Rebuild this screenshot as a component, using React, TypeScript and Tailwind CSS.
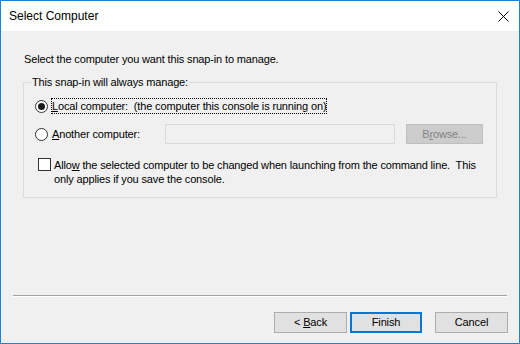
import { useState } from "react";

export default function App() {
    const [mode, setMode] = useState<"local" | "another">("local");
    const [allow, setAllow] = useState(false);

    return (
        <div
            className="w-[520px] h-[344px] flex flex-col border border-[#1883d7] bg-[#f0f0f0] text-[11px] leading-[15px] tracking-[-0.15px] text-black select-none"
            style={{ fontFamily: '"Liberation Sans", Arial, sans-serif' }}
        >
            {/* title bar */}
            <div className="h-[30px] bg-white flex items-center justify-between pl-[8px] pr-[10px] shrink-0">
                <span className="text-[12px] tracking-normal">Select Computer</span>
                <svg width="11" height="11" viewBox="0 0 11 11" className="mt-[1px]">
                    <path d="M0.5 0.5 L10.5 10.5 M10.5 0.5 L0.5 10.5" stroke="#000" strokeWidth="1" />
                </svg>
            </div>

            <div className="flex-1 flex flex-col px-[22px] pt-[21px]">
                <p className="ml-[1px]">Select the computer you want this snap-in to manage.</p>

                <fieldset className="mt-[8px] border border-[#dcdcdc] h-[123px] pl-[11px] pr-[12px]">
                    <legend className="-ml-[4px] px-[1px]">This snap-in will always manage:</legend>

                    <label className="flex items-center mt-[8px] h-[16px]" onClick={() => setMode("local")}>
                        <Radio checked={mode === "local"} />
                        <span className="ml-[3px] px-[1px] outline outline-1 outline-dotted outline-black -outline-offset-1 h-[16px] leading-[16px] whitespace-nowrap">
                            <u>L</u>ocal computer:&nbsp; (the computer this console is running on)
                        </span>
                    </label>

                    <div className="flex items-center mt-[10px] h-[20px]">
                        <label className="flex items-center w-[130px]" onClick={() => setMode("another")}>
                            <Radio checked={mode === "another"} />
                            <span className="ml-[4px]">
                                <u>A</u>nother computer:
                            </span>
                        </label>
                        <div className="w-[230px] h-[20px] border border-[#d9d9d9] bg-[#f0f0f0]" />
                        <button className="ml-[11px] w-[77px] h-[20px] border border-[#bfbfbf] bg-[#cccccc] text-[#838383]">
                            B<u>r</u>owse...
                        </button>
                    </div>

                    <label className="flex items-start mt-[14px]" onClick={() => setAllow(!allow)}>
                        <span className="w-[13px] h-[13px] border border-[#333333] bg-white shrink-0 ml-[3px]">
                            {allow && (
                                <svg width="11" height="11" viewBox="0 0 11 11">
                                    <path d="M2 5.5 L4.5 8 L9 3" stroke="#000" strokeWidth="1.5" fill="none" />
                                </svg>
                            )}
                        </span>
                        <span className="ml-[3px] leading-[14px] whitespace-nowrap">
                            Allo<u>w</u> the selected computer to be changed when launching from the command line.&nbsp; This
                            <br />
                            only applies if you save the console.
                        </span>
                    </label>
                </fieldset>

                <div className="flex-1" />

                <div className="-mx-[10px] h-[2px] border-t border-[#a0a0a0] bg-white" />

                <div className="flex justify-end mt-[15px] mb-[10px] -mr-[11px]">
                    <button className="w-[73px] h-[21px] border border-[#adadad] bg-[#e1e1e1]">
                        &lt; <u>B</u>ack
                    </button>
                    <button className="ml-[3px] w-[72px] h-[21px] border-2 border-[#0078d7] bg-[#e1e1e1]">
                        Finish
                    </button>
                    <button className="ml-[13px] w-[73px] h-[21px] border border-[#adadad] bg-[#e1e1e1]">
                        Cancel
                    </button>
                </div>
            </div>
        </div>
    );
}

function Radio({ checked }: { checked: boolean }) {
    return (
        <span className="w-[13px] h-[13px] rounded-full border border-[#333333] bg-white flex items-center justify-center shrink-0">
            {checked && <span className="w-[7px] h-[7px] rounded-full bg-[#1a1a1a]" />}
        </span>
    );
}
